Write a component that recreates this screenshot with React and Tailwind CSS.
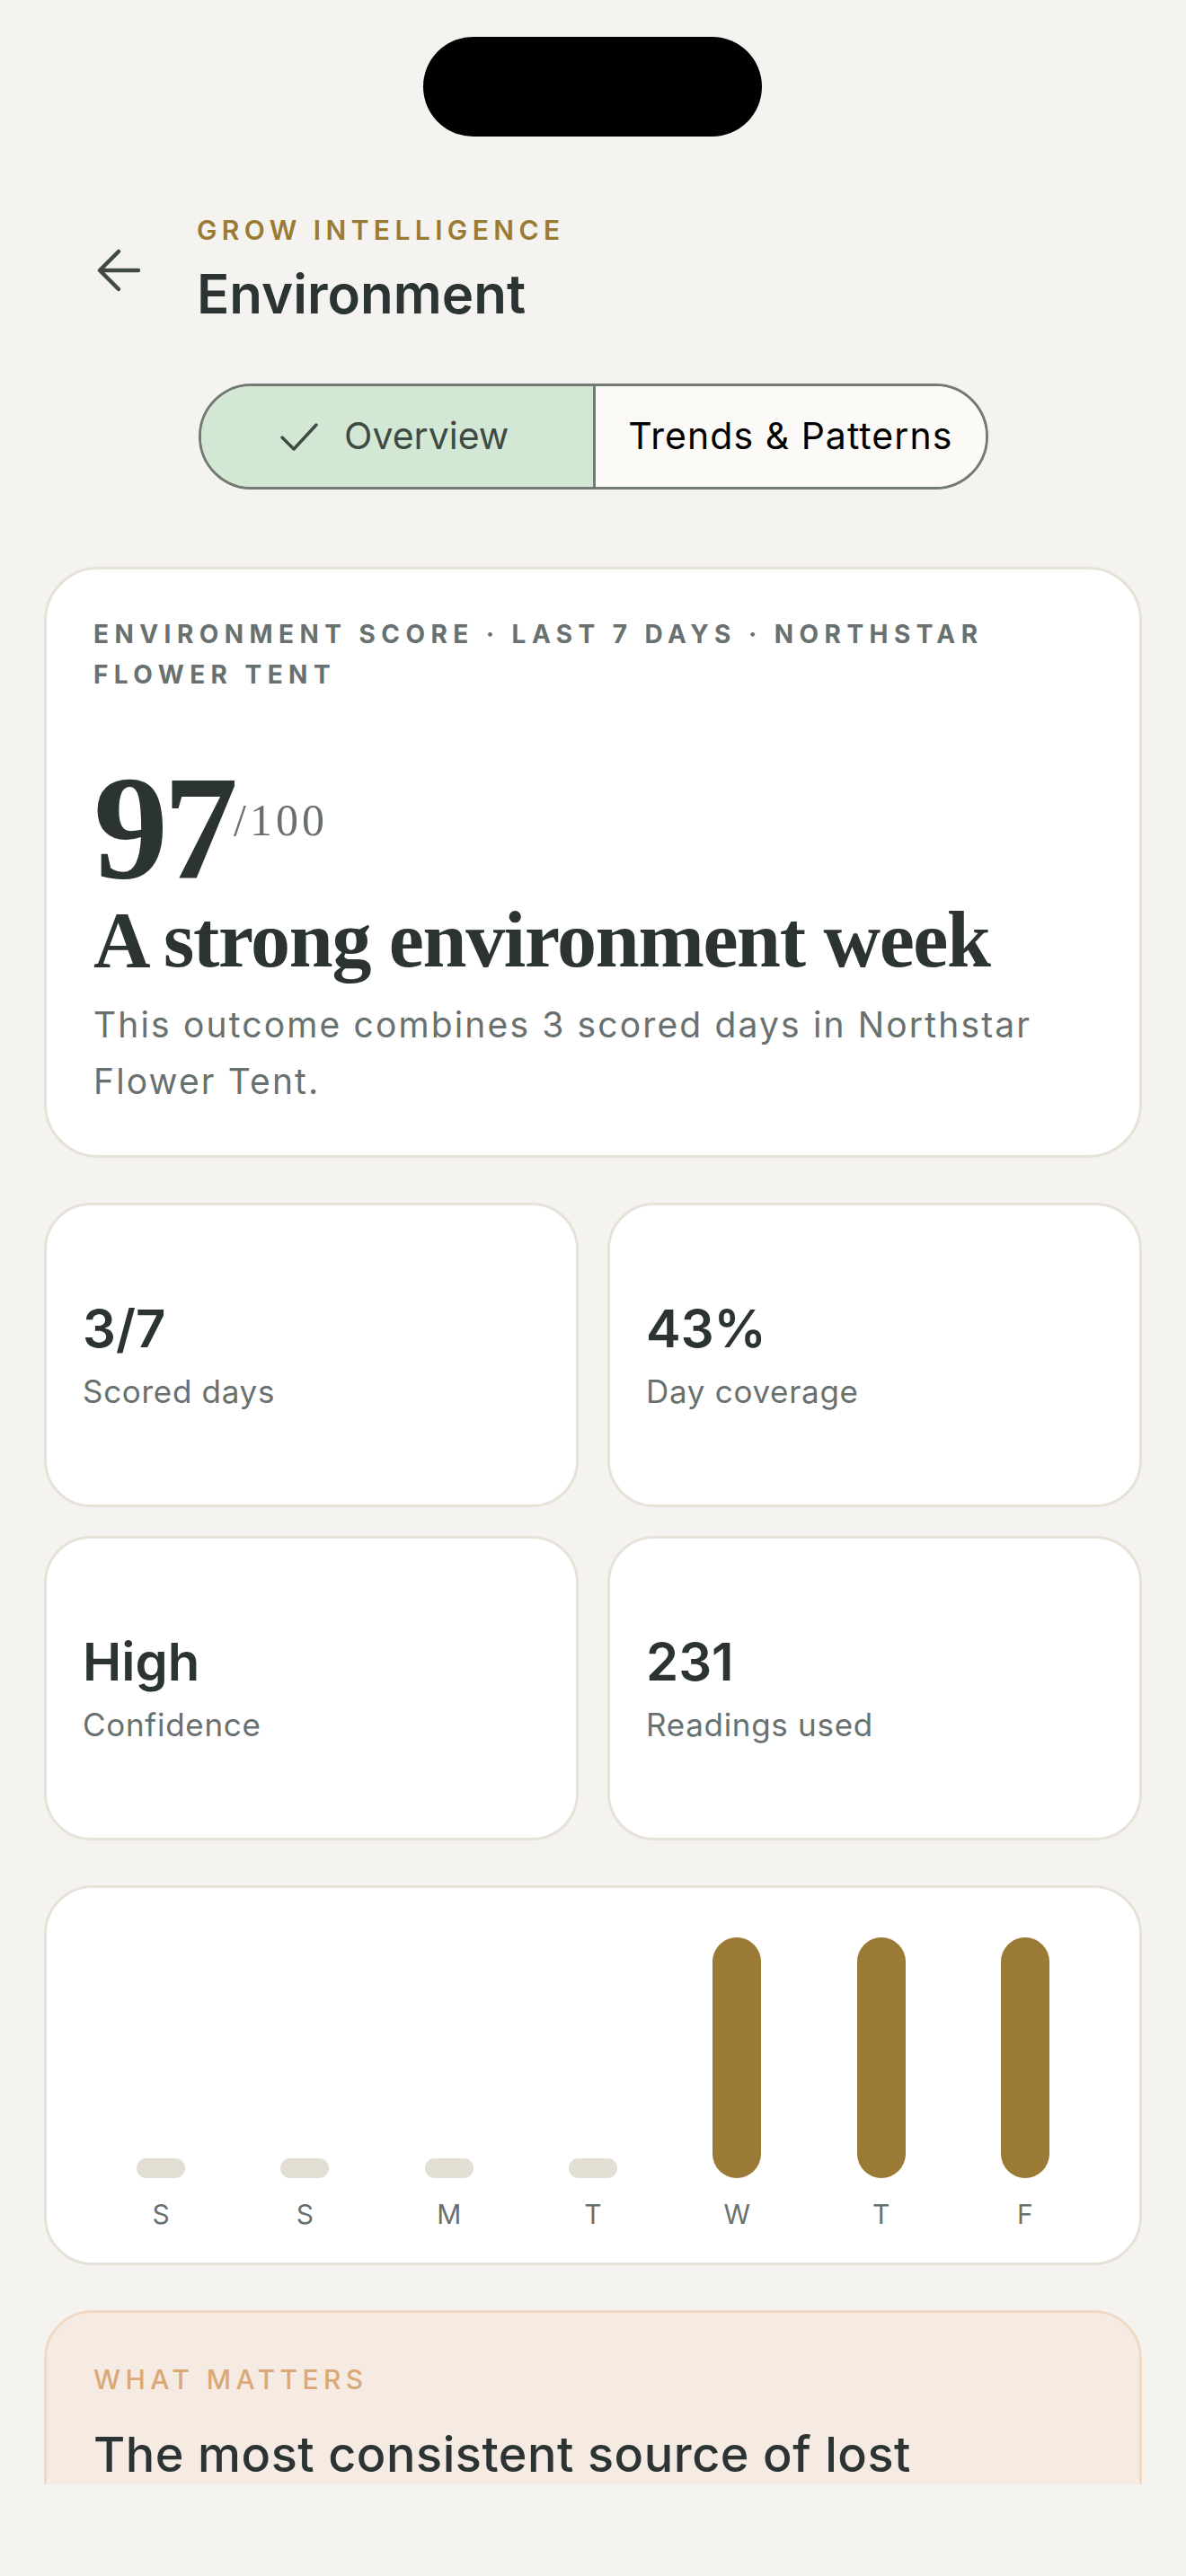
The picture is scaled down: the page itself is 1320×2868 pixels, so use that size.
import React from "react";

const sans = "font-['Inter','Liberation_Sans',sans-serif]";
const serif = "font-['Liberation_Serif',serif]";

const stats = [
  { value: "3/7", label: "Scored days" },
  { value: "43%", label: "Day coverage" },
  { value: "High", label: "Confidence" },
  { value: "231", label: "Readings used" },
];

const days = [
  { label: "S", scored: false },
  { label: "S", scored: false },
  { label: "M", scored: false },
  { label: "T", scored: false },
  { label: "W", scored: true },
  { label: "T", scored: true },
  { label: "F", scored: true },
];

const BackArrow = () => (
  <svg width="56" height="56" viewBox="0 0 56 56" fill="none" className="shrink-0">
    <path
      d="M28 7 L7 28 L28 49 M7 28 H50"
      stroke="#3f4a45"
      strokeWidth="4.5"
      strokeLinecap="round"
      strokeLinejoin="round"
    />
  </svg>
);

const CheckMark = () => (
  <svg width="44" height="33" viewBox="0 0 44 33" fill="none" className="shrink-0">
    <path
      d="M3 17 L16 30 L41 3"
      stroke="#3f4a45"
      strokeWidth="3.5"
      strokeLinecap="round"
      strokeLinejoin="round"
    />
  </svg>
);

export default function App() {
  return (
    <div className={`relative w-[1320px] h-[2868px] overflow-hidden bg-[#f4f3ef] ${sans}`}>
      {/* dynamic island */}
      <div className="absolute left-[471px] top-[41px] w-[377px] h-[111px] rounded-full bg-black z-10" />

      <div className="h-[2766px] overflow-hidden pt-[238px]">
        {/* Header */}
        <div className="flex items-center gap-[59px] pl-[104px]">
          <BackArrow />
          <div>
            <div className="text-[30px] leading-[36px] font-semibold tracking-[0.18em] text-[#9b7a33]">
              GROW INTELLIGENCE
            </div>
            <h1 className="mt-[17px] text-[60px] leading-[72px] font-semibold text-[#2b3333]">
              Environment
            </h1>
          </div>
        </div>

        {/* Segmented tabs */}
        <div className="mx-auto mt-[64px] grid h-[118px] w-[879px] grid-cols-2 overflow-hidden rounded-full border-[3px] border-[#737a73]">
          <button className="flex items-center justify-center gap-[28px] bg-[#d3e8d4] pr-[6px] text-[41px] text-[#3f4a45]">
            <CheckMark />
            <span>Overview</span>
          </button>
          <button className="flex items-center justify-center border-l-[3px] border-[#737a73] bg-[#fbfaf7] text-[41px] tracking-[0.025em] text-black">
            Trends &amp; Patterns
          </button>
        </div>

        <div className="px-[49px]">
          {/* Score card */}
          <div className="mt-[86px] rounded-[60px] border-[3px] border-[#e6e2d8] bg-white px-[52px] pt-[50px] pb-[51px]">
            <div className="text-[28px] leading-[45px] font-bold tracking-[0.23em] text-[#68716f]">
              ENVIRONMENT SCORE · LAST 7 DAYS · NORTHSTAR FLOWER TENT
            </div>
            <div className={`mt-[72px] flex items-start ${serif}`}>
              <span className="text-[166px] leading-[150px] font-bold tracking-[-0.03em] text-[#2b3333]">
                97
              </span>
              <span className="mt-[42px] text-[50px] leading-[50px] tracking-[0.08em] text-[#68716f]">
                /100
              </span>
            </div>
            <h2 className={`${serif} text-[88px] leading-[101px] font-bold tracking-[-0.015em] text-[#2b3333]`}>
              A strong environment week
            </h2>
            <p className="mt-[12px] text-[39px] leading-[63px] tracking-[0.055em] text-[#68716f]">
              This outcome combines 3 scored days in Northstar Flower Tent.
            </p>
          </div>

          {/* Stat grid */}
          <div className="mt-[50px] grid grid-cols-2 gap-[32px]">
            {stats.map((s) => (
              <div
                key={s.label}
                className="flex h-[339px] flex-col justify-center rounded-[52px] border-[3px] border-[#e6e2d8] bg-white pl-[40px]"
              >
                <div className="text-[58px] leading-[70px] font-semibold text-[#2b3333]">{s.value}</div>
                <div className="mt-[10px] text-[35px] leading-[50px] tracking-[0.02em] text-[#68716f]">
                  {s.label}
                </div>
              </div>
            ))}
          </div>

          {/* Week chart */}
          <div className="mt-[50px] rounded-[54px] border-[3px] border-[#e6e2d8] bg-white px-[47px] pt-[55px] pb-[36px]">
            <div className="grid grid-cols-7">
              {days.map((d, i) => (
                <div key={i} className="flex flex-col items-center">
                  <div className="flex h-[268px] items-end">
                    <div
                      className={
                        d.scored
                          ? "h-[268px] w-[54px] rounded-full bg-[#9a7a34]"
                          : "h-[22px] w-[54px] rounded-full bg-[#e3ded3]"
                      }
                    />
                  </div>
                  <div className="mt-[22px] text-[30px] leading-[36px] text-[#68716f]">{d.label}</div>
                </div>
              ))}
            </div>
          </div>

          {/* What matters */}
          <div className="mt-[50px] rounded-[54px] border-[3px] border-[#f2d9c6] bg-[#f5ebe2] px-[52px] pt-[56px] pb-[56px]">
            <div className="text-[30px] leading-[36px] font-medium tracking-[0.18em] text-[#dba878]">
              WHAT MATTERS
            </div>
            <p className="mt-[31px] text-[54px] leading-[70px] font-medium tracking-[0.01em] text-[#2b3333]">
              The most consistent source of lost environment points was late-night humidity drift.
            </p>
          </div>
        </div>
      </div>
    </div>
  );
}
